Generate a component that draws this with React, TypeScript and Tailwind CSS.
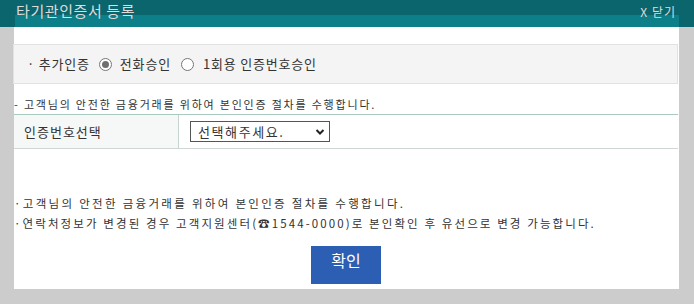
import React from 'react';

const font = { fontFamily: '"Noto Sans CJK KR", "Noto Sans", sans-serif' };

function Radio({ checked }: { checked?: boolean }) {
  return (
    <span className="inline-flex h-[13px] w-[13px] items-center justify-center rounded-full border border-[#767676] bg-white">
      {checked && <span className="h-[7px] w-[7px] rounded-full bg-[#6f6f6f]" />}
    </span>
  );
}

export default function App() {
  return (
    <div className="w-[694px] h-[304px] bg-[#cccccc] overflow-hidden" style={font}>
      {/* Header */}
      <div className="relative h-[27px] bg-[#0a656d]">
        <div className="absolute left-[15px] right-[15px] bottom-0 h-[12px] bg-[#0d7f88]" />
        <div className="relative flex items-center justify-between h-[23px] pl-[16px] pr-[18px] text-[#dcdcdc]">
          <span className="text-[15px] tracking-[0.6px]">타기관인증서 등록</span>
          <span className="text-[12px] tracking-[1px]">X 닫기</span>
        </div>
      </div>

      {/* Body */}
      <div className="ml-[14px] mr-[15px] h-[262px] bg-white pt-[17px]">
        <div className="flex items-center h-[40px] -ml-[1px] mr-[1px] border border-[#e2e2e2] bg-[#f4f4f4] pl-[13px] text-[13px] tracking-[0.8px] text-[#333]">
          <span>· 추가인증</span>
          <span className="ml-[9px] flex items-center gap-[8px]">
            <Radio checked />
            <span>전화승인</span>
          </span>
          <span className="ml-[10px] flex items-center gap-[9px]">
            <Radio />
            <span>1회용 인증번호승인</span>
          </span>
        </div>

        <p className="mt-[11px] h-[19px] text-[11px] leading-[19px] tracking-[1.8px] text-[#333]">
          - 고객님의 안전한 금융거래를 위하여 본인인증 절차를 수행합니다.
        </p>

        <div className="flex h-[35px] mr-[1px] border-t border-[#a9c8c0] border-b border-b-[#cfd6d4] text-[13px] text-[#333]">
          <div className="flex w-[165px] items-center bg-[#f6f8f8] border-r border-[#c5d4d1] pl-[10px] tracking-[1px]">
            인증번호선택
          </div>
          <div className="flex items-center pl-[11px]">
            <div className="flex h-[21px] w-[140px] items-center justify-between border border-[#555] bg-white pl-[7px] pr-[4px] text-[13px] tracking-[1.6px]">
              <span>선택해주세요.</span>
              <svg width="10" height="8" viewBox="0 0 10 8">
                <path d="M1.5 2 L5 5.5 L8.5 2" fill="none" stroke="#222" strokeWidth="2" />
              </svg>
            </div>
          </div>
        </div>

        <div className="mt-[44px] text-[11.5px] leading-[20px] text-[#333]">
          <p className="tracking-[2.3px]">·고객님의 안전한 금융거래를 위하여 본인인증 절차를 수행합니다.</p>
          <p className="tracking-[2.1px]">·연락처정보가 변경된 경우 고객지원센터(☎1544-0000)로 본인확인 후 유선으로 변경 가능합니다.</p>
        </div>

        <div className="mt-[13px] flex justify-center pr-[1px]">
          <button className="h-[38px] w-[70px] bg-[#2c5fb4] pb-[10px] text-[16px] text-white">
            확인
          </button>
        </div>
      </div>
    </div>
  );
}
